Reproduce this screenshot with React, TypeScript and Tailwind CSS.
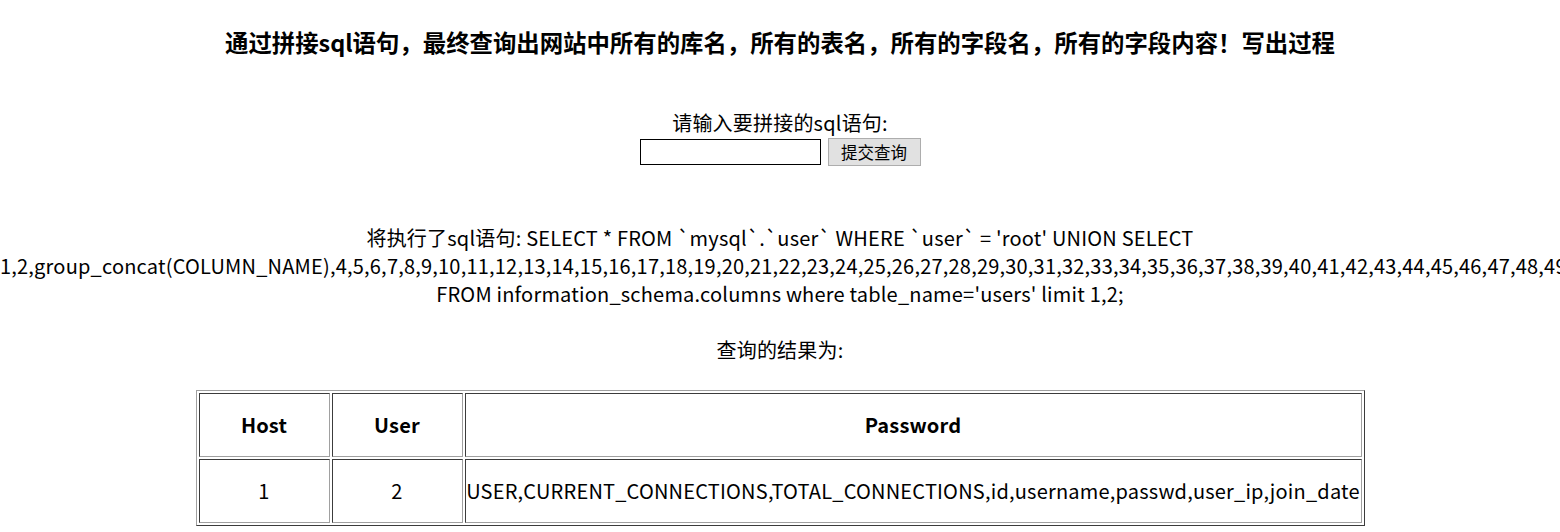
const nums: string[] = ["1", "2", "group_concat(COLUMN_NAME)"]
for (let i = 4; i <= 49; i++) nums.push(String(i))

const sql =
    "SELECT * FROM `mysql`.`user` WHERE `user` = 'root' UNION SELECT " +
    nums.join(",") +
    " FROM information_schema.columns where table_name='users' limit 1,2;"

const cell =
    "border border-t-[#3c3c3c] border-l-[#3c3c3c] border-b-[#a0a0a0] border-r-[#a0a0a0] h-[64px] p-0 text-center"

export default function App() {
    return (
        <div className="min-h-[532px] bg-white text-black font-['Noto_Sans_CJK_SC','Noto_Sans',sans-serif] text-[20px] leading-[28px] tracking-[0.2px] overflow-hidden">
            <h3 className="pt-[27px] text-center font-bold text-[23.4px] leading-[31px] tracking-normal">
                通过拼接sql语句，最终查询出网站中所有的库名，所有的表名，所有的字段名，所有的字段内容！写出过程
            </h3>

            <form className="mt-[51px] text-center" onSubmit={(e) => e.preventDefault()}>
                <p>请输入要拼接的sql语句:</p>
                <div className="flex justify-center items-center gap-[7px] h-[29px]">
                    <input
                        type="text"
                        className="w-[181px] h-[26px] border border-black bg-white px-1 text-[16px] outline-none"
                    />
                    <button
                        type="submit"
                        className="w-[93px] h-[28px] bg-[#e1e1e1] border border-[#adadad] text-[16.5px] leading-[26px] tracking-normal"
                    >
                        提交查询
                    </button>
                </div>
            </form>

            <p className="mt-[58px] text-center">将执行了sql语句: {sql}</p>

            <p className="mt-[28px] text-center">查询的结果为:</p>

            <table className="mt-[26px] mx-auto w-[1169px] border-separate border-spacing-[2px] border border-t-[#a0a0a0] border-l-[#a0a0a0] border-b-[#3c3c3c] border-r-[#3c3c3c]">
                <thead>
                    <tr className="font-bold">
                        <th className={cell + " w-[131px]"}>Host</th>
                        <th className={cell + " w-[131px]"}>User</th>
                        <th className={cell}>Password</th>
                    </tr>
                </thead>
                <tbody>
                    <tr>
                        <td className={cell}>1</td>
                        <td className={cell}>2</td>
                        <td className={cell + " whitespace-nowrap"}>
                            USER,CURRENT_CONNECTIONS,TOTAL_CONNECTIONS,id,username,passwd,user_ip,join_date
                        </td>
                    </tr>
                </tbody>
            </table>
        </div>
    )
}
